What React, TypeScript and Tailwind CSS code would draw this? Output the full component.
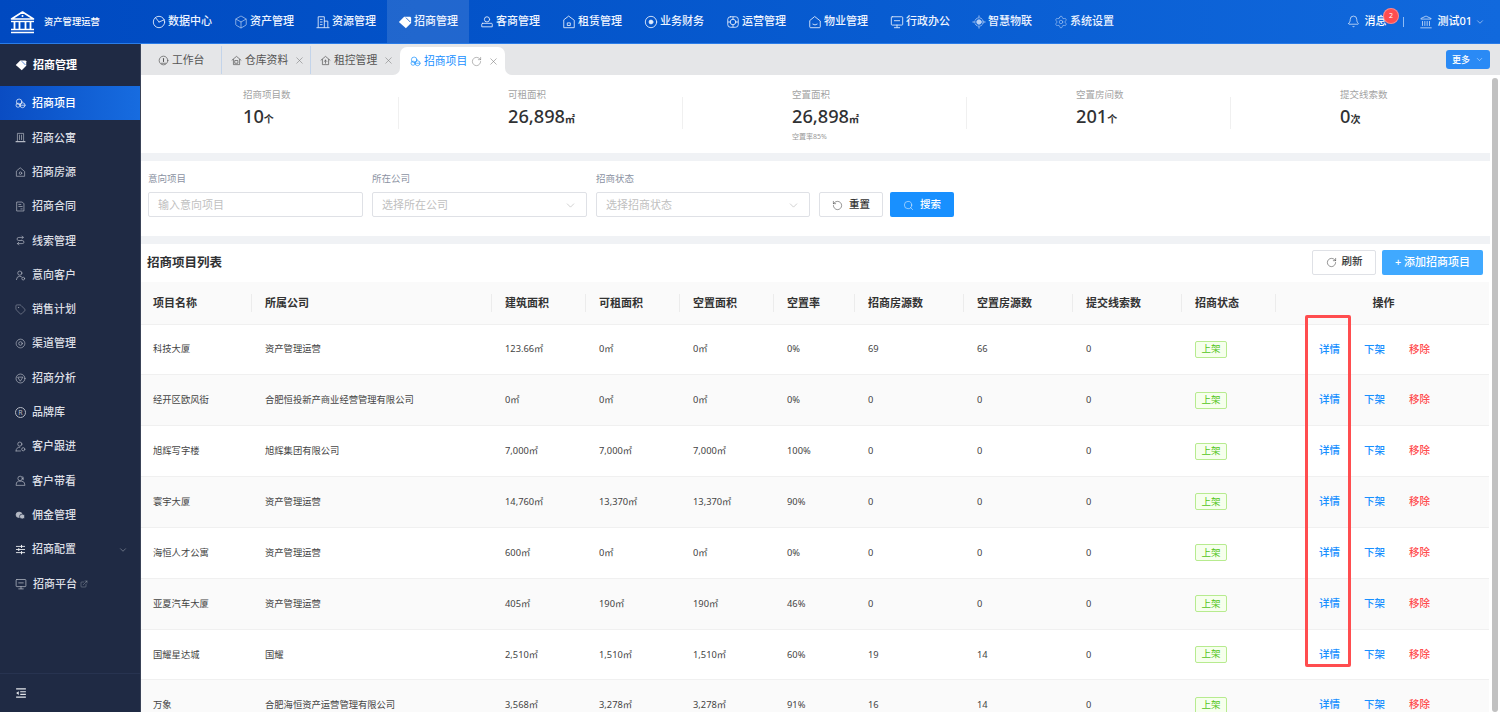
import React from "react";
import { Box, Monitor, Settings, Bell, ChevronDown, X, RotateCw, Search, Tag, ExternalLink, Landmark } from "lucide-react";

type IconP = { size?: number; color?: string; strokeWidth?: number; className?: string };
const mk = (children: React.ReactNode) =>
  function Ic({ size = 14, color = "currentColor", strokeWidth = 1, className = "" }: IconP) {
    return (
      <svg width={size} height={size} viewBox="0 0 16 16" fill="none" stroke={color} strokeWidth={strokeWidth} strokeLinecap="round" strokeLinejoin="round" className={`shrink-0 ${className}`} style={{ color }}>
        {children}
      </svg>
    );
  };

const PieI = mk(<><circle cx="8" cy="8" r="6.5" /><path d="M8 8 L14 5.5 M8 8 L4 3" /></>);
const ResI = mk(<><path d="M2.5 14 V2 H9.5 V14" /><path d="M9.5 7 H13.5 V14" /><path d="M1 14.5 H15" /><path d="M5 5 H7 M5 8 H7 M5 11 H7" /></>);
const BustI = mk(<><circle cx="8" cy="5" r="3" /><path d="M3 9.5 H13 Q14 9.5 14 10.5 V13.5 H2 V10.5 Q2 9.5 3 9.5 Z" /></>);
const HomeI = mk(<><path d="M8 1.5 L14 6 V14.5 H2 V6 Z" /><path d="M6.5 9 H9.5 V12 H6.5 Z" /></>);
const MoneyI = mk(<><circle cx="8" cy="8" r="6.5" /><circle cx="8" cy="8" r="2.2" fill="currentColor" /></>);
const OpsI = mk(<><rect x="2" y="2" width="12" height="12" rx="3" /><circle cx="8" cy="8" r="3.2" /><path d="M2.5 8 H5 M11 8 H13.5 M8 2.5 V5 M8 11 V13.5" /></>);
const SmileHomeI = mk(<><path d="M8 2 L14 6.8 V13.5 Q14 14.5 13 14.5 H3 Q2 14.5 2 13.5 V6.8 Z" /><path d="M5.5 10.5 Q8 12.5 10.5 10.5" /></>);
const ScreenI = mk(<><rect x="1.5" y="2" width="13" height="9.5" rx="1" /><path d="M5 6.5 H11 M8 11.5 V14 M5 14.5 H11" /></>);
const SmartI = mk(<><circle cx="8" cy="8" r="2.6" fill="currentColor" /><circle cx="8" cy="8" r="4.8" strokeDasharray="2 1.4" /><path d="M8 1 V2.2 M8 13.8 V15 M1 8 H2.2 M13.8 8 H15" /></>);
const CoinsI = mk(<><circle cx="6" cy="5.5" r="4" /><circle cx="4.5" cy="10.5" r="3" /><circle cx="11" cy="10.5" r="3.6" /><path d="M9.5 10.5 H12.5" /></>);
const TowerI = mk(<><path d="M3.5 13 V2 H12.5 V13" /><path d="M1.5 14 H14.5" strokeWidth="1.6" /><path d="M6.5 4.5 V11 M9.5 4.5 V11" /></>);
const DotHomeI = mk(<><path d="M8 1.5 L14 6.5 V13.5 H2 V6.5 Z" /><circle cx="8" cy="9" r="1.8" /></>);
const DocI = mk(<><path d="M3 1.5 H10.5 L13 4 V14.5 H3 Z" /><path d="M5.5 5 H8.5 M5.5 8 H10.5 M8.5 11.5 H10.5" /></>);
const LeadI = mk(<><path d="M12 3.5 H5.5 Q3 3.5 3 6 Q3 8 5.5 8 H10.5 Q13 8 13 10.5 Q13 12.5 10.5 12.5 H3.5" /><path d="M10 1.5 L12 3.5 L10 5.5 M5.5 10.5 L3.5 12.5 L5.5 14.5" /></>);
const ProspectI = mk(<><circle cx="7" cy="4.5" r="3" /><path d="M2 14 Q2.5 9 7 9 L9.5 10" /><circle cx="12" cy="12.5" r="2" /></>);
const ChannelI = mk(<><circle cx="8" cy="8" r="6.3" strokeDasharray="3 1.2" /><circle cx="8" cy="8" r="2.6" /></>);
const AnalyzeI = mk(<><circle cx="8" cy="8" r="6.5" /><path d="M4.5 6 H11.5 L8 11.5 Z" /></>);
const FollowI = mk(<><circle cx="7" cy="4.5" r="3" /><path d="M1.5 14.5 Q1.5 9 7 9 M1.5 14.5 H8" /><circle cx="12" cy="12" r="2.3" /></>);
const VisitI = mk(<><circle cx="7.5" cy="5" r="3.3" /><path d="M1.5 14.5 Q1.5 9.5 5 9 H10 Q14.5 9.5 14.5 14.5 Z" /><path d="M11.5 2.5 Q13 4.5 12 7" /></>);
const CommI = mk(<><ellipse cx="6" cy="7" rx="4.5" ry="4" fill="currentColor" /><ellipse cx="10.5" cy="9.5" rx="4" ry="3.5" fill="currentColor" stroke="#1f2a44" /></>);
const ConfI = mk(<><path d="M2 3.5 H14 M2 8 H14 M2 12.5 H14" strokeWidth="1.3" /><path d="M9.5 2 V5 M5.5 6.5 V9.5 M9.5 11 V14" strokeWidth="1.6" /></>);
const CollapseI = mk(<><path d="M1.5 2.5 H14.5 M7 6.3 H14.5 M7 9.7 H14.5 M1.5 13.5 H14.5" strokeWidth="1.6" strokeLinecap="butt" /><path d="M5 5.5 V10.5 L1.5 8 Z" fill="currentColor" stroke="none" /></>);
const GaugeI = mk(<><circle cx="8" cy="8" r="6.3" /><path d="M8 5 V9.5" strokeWidth="1.5" /><path d="M5 12 H11" /></>);
const UpHomeI = mk(<><path d="M1.5 7.5 L8 2 L14.5 7.5" /><path d="M3.5 6.5 V14 H12.5 V6.5" /><path d="M8 12 V7.5 M6 9.5 L8 7.5 L10 9.5" /></>);
const StoreHomeI = mk(<><path d="M1.5 7.5 L8 2 L14.5 7.5" /><path d="M3.5 6.5 V14 H12.5 V6.5" /><rect x="6" y="8" width="4" height="4" /></>);
const BrandI = ({ size = 11, color = "#c6cad2" }: IconP) => (
  <span className="rounded-full border flex items-center justify-center text-[7px] leading-none shrink-0" style={{ width: size, height: size, borderColor: color, color }}>R</span>
);

const nav: [any, string][] = [
  [PieI, "数据中心"], [Box, "资产管理"], [ResI, "资源管理"], [null, "招商管理"], [BustI, "客商管理"], [HomeI, "租赁管理"],
  [MoneyI, "业务财务"], [OpsI, "运营管理"], [SmileHomeI, "物业管理"], [ScreenI, "行政办公"], [SmartI, "智慧物联"], [Settings, "系统设置"],
];

const side: [any, string][] = [
  [CoinsI, "招商项目"], [TowerI, "招商公寓"], [DotHomeI, "招商房源"], [DocI, "招商合同"], [LeadI, "线索管理"], [ProspectI, "意向客户"],
  [Tag, "销售计划"], [ChannelI, "渠道管理"], [AnalyzeI, "招商分析"], [BrandI, "品牌库"], [FollowI, "客户跟进"], [VisitI, "客户带看"],
  [CommI, "佣金管理"], [ConfI, "招商配置"], [ScreenI, "招商平台"],
];

const stats = [
  { l: "招商项目数", v: "10", u: "个", c: "pl-[102px]" },
  { l: "可租面积", v: "26,898", u: "㎡", c: "pl-[109px]" },
  { l: "空置面积", v: "26,898", u: "㎡", c: "pl-[109px]", s: "空置率85%" },
  { l: "空置房间数", v: "201", u: "个", c: "pl-[109px]" },
  { l: "提交线索数", v: "0", u: "次", c: "pl-[109px]" },
];

const heads = ["项目名称", "所属公司", "建筑面积", "可租面积", "空置面积", "空置率", "招商房源数", "空置房源数", "提交线索数", "招商状态"];
const widths = ["w-[111px]", "w-[240px]", "w-[94px]", "w-[94px]", "w-[94px]", "w-[81px]", "w-[109px]", "w-[109px]", "w-[109px]", "w-[94px]"];

const rows = [
  ["科技大厦", "资产管理运营", "123.66㎡", "0㎡", "0㎡", "0%", "69", "66", "0"],
  ["经开区欧风街", "合肥恒投新产商业经营管理有限公司", "0㎡", "0㎡", "0㎡", "0%", "0", "0", "0"],
  ["旭辉写字楼", "旭辉集团有限公司", "7,000㎡", "7,000㎡", "7,000㎡", "100%", "0", "0", "0"],
  ["寰宇大厦", "资产管理运营", "14,760㎡", "13,370㎡", "13,370㎡", "90%", "0", "0", "0"],
  ["海恒人才公寓", "资产管理运营", "600㎡", "0㎡", "0㎡", "0%", "0", "0", "0"],
  ["亚夏汽车大厦", "资产管理运营", "405㎡", "190㎡", "190㎡", "46%", "0", "0", "0"],
  ["国耀星达城", "国耀", "2,510㎡", "1,510㎡", "1,510㎡", "60%", "19", "14", "0"],
  ["万象", "合肥海恒资产运营管理有限公司", "3,568㎡", "3,278㎡", "3,278㎡", "91%", "16", "14", "0"],
];

function TagFill({ size = 14 }: { size?: number }) {
  return (
    <svg width={size} height={size} viewBox="0 0 16 16" className="shrink-0">
      <path d="M1 8 L7 2 H14 L15 3 V9 L9 15 Z" fill="#fff" />
      <path d="M9 3 L14 8" stroke="#1f5fc8" strokeWidth="1" fill="none" />
    </svg>
  );
}

function Logo() {
  return (
    <svg width="25" height="24" viewBox="0 0 25 24" fill="none" stroke="#fff" className="shrink-0">
      <path d="M1.5 9 L12.5 2 L23.5 9 Z" strokeWidth="1.6" strokeLinejoin="round" />
      <circle cx="12.5" cy="6" r="1" fill="#fff" stroke="none" />
      <path d="M1 11.5 H24" strokeWidth="1.4" />
      <path d="M4.5 11.5 V19 M9.5 11.5 V19 M15.5 11.5 V19 M20.5 11.5 V19" strokeWidth="1.8" />
      <path d="M1 19.5 H24 M1 22.5 H24" strokeWidth="1.5" />
    </svg>
  );
}

function Field({ label, text, select, w }: { label: string; text: string; select?: boolean; w: string }) {
  return (
    <div className={w}>
      <div className="text-[9.5px] leading-[12px] text-[#8c93a3] mb-[7px]">{label}</div>
      <div className="h-[25px] border border-[#dfe1e6] rounded-[2px] flex items-center justify-between pl-[9px] pr-[9px] pt-px bg-white">
        <span className="text-[11px] text-[#bfbfbf]">{text}</span>
        {select && <ChevronDown size={13} strokeWidth={1} color="#aaa" />}
      </div>
    </div>
  );
}

export default function App() {
  return (
    <div className="w-[1500px] h-[712px] overflow-hidden flex flex-col bg-[#f0f2f5] font-['Noto_Sans','Noto_Sans_CJK_SC',sans-serif]">
      <header className="h-[44px] shrink-0 flex items-stretch text-white bg-gradient-to-r from-[#0049c0] to-[#1169dd] border-b border-[#2a7ce8]">
        <div className="w-[141px] shrink-0 flex items-center pl-[10px] gap-[9px]">
          <Logo />
          <span className="text-[9.3px] font-medium whitespace-nowrap">资产管理运营</span>
        </div>
        {nav.map(([I, t]) => (
          <div key={t} className={`w-[82px] shrink-0 pl-[11px] flex items-center gap-[2px] ${t === "招商管理" ? "bg-[#ffffff1f]" : ""}`}>
            {I ? <I size={14} strokeWidth={1} color={t === "系统设置" || t === "智慧物联" ? "#b9d2f6" : "#e3edfc"} className="shrink-0" /> : <TagFill />}
            <span className="text-[11px] font-medium text-[#eef4ff] whitespace-nowrap">{t}</span>
          </div>
        ))}
        <div className="flex-1 flex items-center justify-end relative">
          <Bell size={13} strokeWidth={1.2} className="mr-[4px]" />
          <span className="text-[11px] font-medium mr-[17px]">消息</span>
          <span className="absolute left-[258px] top-[8px] w-[16px] h-[16px] rounded-full bg-[#ff4d4f] border border-[#ffffff55] text-[7px] flex items-center justify-center">2</span>
          <span className="w-px h-[10px] bg-[#8fbcf5] mr-[15px]" />
          <Landmark size={14} strokeWidth={1.1} className="mr-[4px]" />
          <span className="text-[11px] font-medium">测试01</span>
          <ChevronDown size={10} strokeWidth={1.2} className="ml-[3px] mr-[15px]" />
        </div>
      </header>

      <div className="flex-1 min-h-0 flex">
        <aside className="w-[141px] shrink-0 flex flex-col bg-[#1f2a44] border-r border-[#3a4358]">
          <div className="h-[42px] shrink-0 flex items-center pl-[15px] gap-[6px]">
            <TagFill size={12} />
            <span className="text-[11px] font-bold text-white">招商管理</span>
          </div>
          {side.map(([I, t], i) => (
            <div key={t} className={`h-[34.3px] shrink-0 flex items-center pt-px pl-[15px] gap-[6px] relative ${i === 0 ? "bg-gradient-to-r from-[#0a4cc2] to-[#176ce0] text-white" : "text-[#dcdfe5]"}`}>
              <I size={t === "招商平台" ? 12 : 11} strokeWidth={1} className="shrink-0" color={i === 0 ? "#fff" : t === "招商配置" ? "#eceef2" : "#b4b9c4"} />
              <span className="text-[11px] font-medium whitespace-nowrap">{t}</span>
              {t === "招商配置" && <ChevronDown size={10} strokeWidth={1.4} color="#9aa0ad" className="ml-[36px]" />}
              {t === "招商平台" && <ExternalLink size={8} strokeWidth={1} color="#c6cad2" className="-ml-[3px] mt-px" />}
            </div>
          ))}
          <div className="mt-auto h-[39px] border-t border-[#273350] flex items-center pl-[15px]">
            <CollapseI size={12} color="#e5e7eb" />
          </div>
        </aside>

        <main className="flex-1 min-w-0 flex flex-col">
          <div className="h-[31px] shrink-0 bg-[#e5e6e8] flex items-end relative">
            <div className="w-[81px] h-[28px] flex items-center pt-px pl-[17px] gap-[3px] border-r border-[#c3d4ea] mb-[1px]">
              <GaugeI size={11} color="#555" />
              <span className="text-[10.8px] text-[#555]">工作台</span>
            </div>
            <div className="w-[89px] h-[28px] flex items-center pt-px pl-[9px] gap-[3px] border-r border-[#c3d4ea] mb-[1px]">
              <StoreHomeI size={11} color="#555" />
              <span className="text-[10.8px] text-[#555]">仓库资料</span>
              <X size={11} strokeWidth={1.2} color="#777" className="ml-[3px]" />
            </div>
            <div className="w-[89px] h-[28px] flex items-center pt-px pl-[9px] gap-[3px] mb-[1px]">
              <UpHomeI size={11} color="#555" />
              <span className="text-[10.8px] text-[#555]">租控管理</span>
              <X size={11} strokeWidth={1.2} color="#777" className="ml-[3px]" />
            </div>
            <div className="w-[105px] h-[28px] bg-white rounded-t-[7px] flex items-center pt-px pl-[10px] gap-[3px] relative">
              <span className="absolute -left-[7px] bottom-0 w-[7px] h-[7px] bg-white"><span className="block w-full h-full bg-[#e5e6e8] rounded-br-[7px]" /></span>
              <span className="absolute -right-[7px] bottom-0 w-[7px] h-[7px] bg-white"><span className="block w-full h-full bg-[#e5e6e8] rounded-bl-[7px]" /></span>
              <CoinsI size={11} color="#1890ff" />
              <span className="text-[10.8px] text-[#1890ff]">招商项目</span>
              <RotateCw size={11} strokeWidth={1} color="#666" className="ml-[1px]" />
              <X size={11} strokeWidth={1.2} color="#777" className="ml-[3px]" />
            </div>
            <div className="absolute right-[10px] top-[6px] w-[44px] h-[19px] rounded-[3px] bg-[#2a8af5] text-white flex items-center justify-center gap-[5px]">
              <span className="text-[9px] font-medium">更多</span>
              <ChevronDown size={9} strokeWidth={1.2} />
            </div>
          </div>

          <div className="flex-1 min-h-0 flex">
            <div className="w-[1349px] shrink-0 flex flex-col overflow-hidden">
              <section className="h-[78px] shrink-0 bg-white grid grid-cols-[258px_284px_284px_264px_1fr] pt-[14px]">
                {stats.map((s, i) => (
                  <div key={s.l} className="h-[48px] relative">
                    <div className={`${s.c} text-[9.5px] leading-[12px] text-[#a3a3a3]`}>{s.l}</div>
                    <div className={`${s.c} flex items-baseline mt-[3px] text-[#303133] leading-[25px]`}>
                      <span className="text-[18.2px] font-medium">{s.v}</span>
                      <span className="text-[10px] font-bold">{s.u}</span>
                    </div>
                    {s.s && <div className={`${s.c} text-[7px] leading-[10px] text-[#999]`}>{s.s}</div>}
                    {i < 4 && <span className="absolute right-0 top-[8px] w-px h-[32px] bg-[#f0f0f0]" />}
                  </div>
                ))}
              </section>

              <section className="h-[75px] mt-[8px] shrink-0 bg-white flex items-start pl-[7px] pt-[12px] gap-[9px]">
                <Field label="意向项目" text="输入意向项目" w="w-[215px]" />
                <Field label="所在公司" text="选择所在公司" select w="w-[215px]" />
                <Field label="招商状态" text="选择招商状态" select w="w-[214px]" />
                <div className="flex gap-[7px] mt-[19px]">
                  <div className="w-[64px] h-[25px] pt-px border border-[#dfe1e6] rounded-[2px] flex items-center justify-center gap-[6px] text-[#333]">
                    <RotateCw size={11} strokeWidth={1.1} className="-scale-x-100" />
                    <span className="text-[10.5px] font-medium">重置</span>
                  </div>
                  <div className="w-[64px] h-[25px] pt-px rounded-[2px] bg-[#1890ff] flex items-center justify-center gap-[6px] text-white">
                    <Search size={11} strokeWidth={1.1} />
                    <span className="text-[10.5px] font-medium">搜索</span>
                  </div>
                </div>
              </section>

              <section className="flex-1 mt-[8px] bg-white overflow-hidden">
                <div className="h-[38px] flex items-center justify-between pl-[6px] pr-[7px] pb-[2px]">
                  <span className="text-[12.5px] font-bold text-[#303133] mt-[2px]">招商项目列表</span>
                  <div className="flex gap-[6px]">
                    <div className="w-[64px] h-[25px] border border-[#dfe1e6] rounded-[2px] flex items-center justify-center gap-[5px] text-[#333]">
                      <RotateCw size={11} strokeWidth={1.1} />
                      <span className="text-[10.5px] font-medium">刷新</span>
                    </div>
                    <div className="w-[101px] h-[25px] rounded-[2px] bg-[#40a9ff] flex items-center justify-center text-white text-[11px] font-medium">+ 添加招商项目</div>
                  </div>
                </div>
                <table className="w-[1348px] table-fixed border-collapse">
                  <colgroup>
                    {widths.map((w, i) => <col key={i} className={w} />)}
                    <col />
                  </colgroup>
                  <thead>
                    <tr className="h-[42px] bg-[#fafafa] border-b border-[#f0f0f0]">
                      {heads.map((h, i) => (
                        <th key={h} className="p-0 font-normal">
                          <div className={`h-[18px] border-r border-[#ececec] ${i === 0 ? "pl-[12px]" : "pl-[13px]"} flex items-center text-[11px] font-semibold text-[#333] whitespace-nowrap`}>{h}</div>
                        </th>
                      ))}
                      <th className="p-0 pl-[2px] text-[11px] font-semibold text-[#333] text-center">操作</th>
                    </tr>
                  </thead>
                  <tbody>
                    {rows.map((r, i) => (
                      <tr key={r[0]} className={`h-[50.85px] border-b border-[#f0f0f0] ${i % 2 ? "bg-[#fafafa]" : "bg-white"}`}>
                        {r.map((c, j) => (
                          <td key={j} className={`p-0 ${j === 0 ? "pl-[12px]" : "pl-[13px]"} text-[9.3px] text-[#444] whitespace-nowrap`}>{c}</td>
                        ))}
                        <td className="p-0 pl-[13px]">
                          <div className="flex w-[32px] h-[17px] items-center justify-center border border-[#b7eb8f] bg-[#f6ffed] rounded-[2px] text-[9.5px] text-[#52c41a]">上架</div>
                        </td>
                        <td className="p-0 pl-[43px]">
                          <div className="flex gap-[24px] text-[10.5px] font-medium whitespace-nowrap">
                            <span className="text-[#1890ff]">详情</span>
                            <span className="text-[#1890ff]">下架</span>
                            <span className="text-[#ff4d4f]">移除</span>
                          </div>
                        </td>
                      </tr>
                    ))}
                  </tbody>
                </table>
              </section>
            </div>
            <div className="flex-1 bg-white pt-[3px] pl-[2px] pr-[2px]">
              <div className="h-full rounded-full bg-[#c1c1c1]" />
            </div>
          </div>
        </main>
      </div>

      <div className="absolute left-[1305px] top-[315px] w-[46px] h-[352px] border-[3px] border-[#ff4d4f] rounded-[2px]" />
    </div>
  );
}
